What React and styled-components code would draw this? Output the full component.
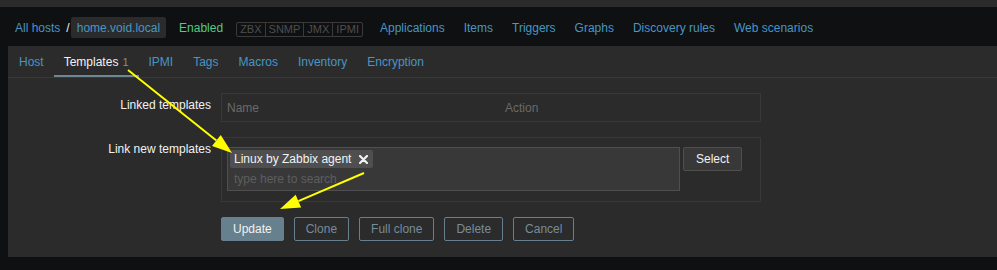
import React from "react";
import styled, { createGlobalStyle } from "styled-components";

const GlobalStyle = createGlobalStyle`
  html, body {
    margin: 0;
    padding: 0;
    background: #0e1012;
  }
  body {
    font-family: "Liberation Sans", Arial, sans-serif;
    font-size: 12px;
    color: #f2f2f2;
  }
  #root {
    position: relative;
    width: 997px;
    height: 270px;
    overflow: hidden;
  }
`;

const TopStrip = styled.div`
  height: 7px;
  background: #2b2b2b;
`;

const Header = styled.div`
  box-sizing: border-box;
  height: 39px;
  padding: 2px 0 0 15px;
  display: flex;
  align-items: center;
  background: #0e1012;
`;

const Link = styled.span`
  color: #4796c4;
  white-space: nowrap;
`;

const Slash = styled.span`
  color: #f2f2f2;
  margin: 0 1px 0 6px;
`;

const HostBox = styled.span`
  display: inline-flex;
  align-items: center;
  height: 21px;
  padding: 0 6px;
  background: #2b2b2b;
  border-radius: 2px;
  color: #4796c4;
`;

const Enabled = styled.span`
  color: #55c985;
  margin-left: 13px;
`;

const StatusGroup = styled.div`
  display: flex;
  margin: 3px 0 0 13px;
  border: 1px solid #3a3a3a;
  border-radius: 2px;
`;

const StatusCell = styled.span`
  height: 13px;
  line-height: 13px;
  padding: 0 3px;
  font-size: 11px;
  color: #4f4f4f;
  & + & {
    border-left: 1px solid #3a3a3a;
  }
`;

const NavLinks = styled.div`
  display: flex;
  gap: 19px;
  margin-left: 17px;
`;

const Panel = styled.div`
  margin-left: 8px;
  height: 211px;
  background: #2b2b2b;
`;

const TabBar = styled.div`
  display: flex;
  height: 31px;
  padding-left: 1px;
  border-bottom: 1px solid #383838;
`;

const Tab = styled.div`
  box-sizing: border-box;
  display: flex;
  align-items: center;
  padding: 2px 10px 0;
  color: ${(p) => (p.$active ? "#f2f2f2" : "#4796c4")};
  border-bottom: 2px solid ${(p) => (p.$active ? "#6d8795" : "transparent")};
`;

const Count = styled.span`
  color: #8c8c8c;
  font-size: 11px;
  margin-left: 4px;
`;

const Form = styled.div`
  display: flex;
  flex-direction: column;
  gap: 15px;
  padding: 15px 0 16px;
`;

const Row = styled.div`
  display: grid;
  grid-template-columns: 203px 540px;
  column-gap: 10px;
`;

const Label = styled.div`
  text-align: right;
  padding-top: 5px;
  line-height: 14px;
`;

const TableBox = styled.div`
  box-sizing: border-box;
  height: 29px;
  border: 1px solid #383838;
  display: grid;
  grid-template-columns: 278px 1fr;
  align-items: center;
  padding: 1px 0 0 5px;
  color: #6a6a6a;
`;

const FieldBox = styled.div`
  box-sizing: border-box;
  border: 1px solid #383838;
  padding: 9px 0 10px 5px;
  display: flex;
  align-items: flex-start;
  gap: 3px;
`;

const MultiSelect = styled.div`
  box-sizing: border-box;
  width: 453px;
  height: 44px;
  background: #383838;
  border: 1px solid #4f4f4f;
  padding: 2px;
  display: flex;
  flex-direction: column;
  align-items: flex-start;
`;

const Chip = styled.span`
  display: inline-flex;
  align-items: center;
  gap: 8px;
  height: 18px;
  padding: 0 5px 0 4px;
  background: #4f4f4f;
  border-radius: 2px;
  color: #f2f2f2;
`;

const Placeholder = styled.span`
  padding: 4px 0 0 4px;
  color: #5e5e5e;
`;

const Button = styled.button`
  box-sizing: border-box;
  height: 24px;
  padding: 0 11px;
  font-family: inherit;
  font-size: 12px;
  border-radius: 2px;
  border: 1px solid #66808d;
  background: ${(p) => (p.$primary ? "#66808d" : "transparent")};
  color: ${(p) => (p.$primary ? "#f2f2f2" : "#768d99")};
`;

const SelectButton = styled(Button)`
  border-color: #4f4f4f;
  background: #383838;
  color: #f2f2f2;
  padding: 0 12px;
`;

const Actions = styled.div`
  display: flex;
  gap: 10px;
  grid-column: 2;
`;

const Overlay = styled.svg`
  position: absolute;
  left: 0;
  top: 0;
  pointer-events: none;
`;

function Arrow({ x1, y1, x2, y2, head = 20, half = 7 }) {
  const dx = x2 - x1;
  const dy = y2 - y1;
  const len = Math.hypot(dx, dy);
  const ux = dx / len;
  const uy = dy / len;
  const bx = x2 - ux * head;
  const by = y2 - uy * head;
  const pts = [
    [x2, y2],
    [bx - uy * half, by + ux * half],
    [bx + uy * half, by - ux * half],
  ]
    .map((p) => p.join(","))
    .join(" ");
  return (
    <g>
      <line x1={x1} y1={y1} x2={bx} y2={by} stroke="#ffff00" strokeWidth="2" />
      <polygon points={pts} fill="#ffff00" />
    </g>
  );
}

const RemoveIcon = () => (
  <svg width="9" height="9" viewBox="0 0 9 9">
    <path d="M1 1L8 8M8 1L1 8" stroke="#f2f2f2" strokeWidth="2.2" strokeLinecap="round" />
  </svg>
);

export default function App() {
  const links = ["Applications", "Items", "Triggers", "Graphs", "Discovery rules", "Web scenarios"];
  const tabs = ["Host", "Templates", "IPMI", "Tags", "Macros", "Inventory", "Encryption"];

  return (
    <>
      <GlobalStyle />
      <TopStrip />
      <Header>
        <Link>All hosts</Link>
        <Slash>/</Slash>
        <HostBox>home.void.local</HostBox>
        <Enabled>Enabled</Enabled>
        <StatusGroup>
          {["ZBX", "SNMP", "JMX", "IPMI"].map((s) => (
            <StatusCell key={s}>{s}</StatusCell>
          ))}
        </StatusGroup>
        <NavLinks>
          {links.map((l) => (
            <Link key={l}>{l}</Link>
          ))}
        </NavLinks>
      </Header>
      <Panel>
        <TabBar>
          {tabs.map((t) => (
            <Tab key={t} $active={t === "Templates"}>
              {t}
              {t === "Templates" && <Count>1</Count>}
            </Tab>
          ))}
        </TabBar>
        <Form>
          <Row>
            <Label>Linked templates</Label>
            <TableBox>
              <span>Name</span>
              <span>Action</span>
            </TableBox>
          </Row>
          <Row>
            <Label>Link new templates</Label>
            <FieldBox>
              <MultiSelect>
                <Chip>
                  Linux by Zabbix agent
                  <RemoveIcon />
                </Chip>
                <Placeholder>type here to search</Placeholder>
              </MultiSelect>
              <SelectButton>Select</SelectButton>
            </FieldBox>
          </Row>
          <Row>
            <Actions>
              <Button $primary>Update</Button>
              <Button>Clone</Button>
              <Button>Full clone</Button>
              <Button>Delete</Button>
              <Button>Cancel</Button>
            </Actions>
          </Row>
        </Form>
      </Panel>
      <Overlay width="997" height="270">
        <Arrow x1={128} y1={70} x2={232} y2={153} />
        <Arrow x1={364} y1={173} x2={280} y2={209} />
      </Overlay>
    </>
  );
}
